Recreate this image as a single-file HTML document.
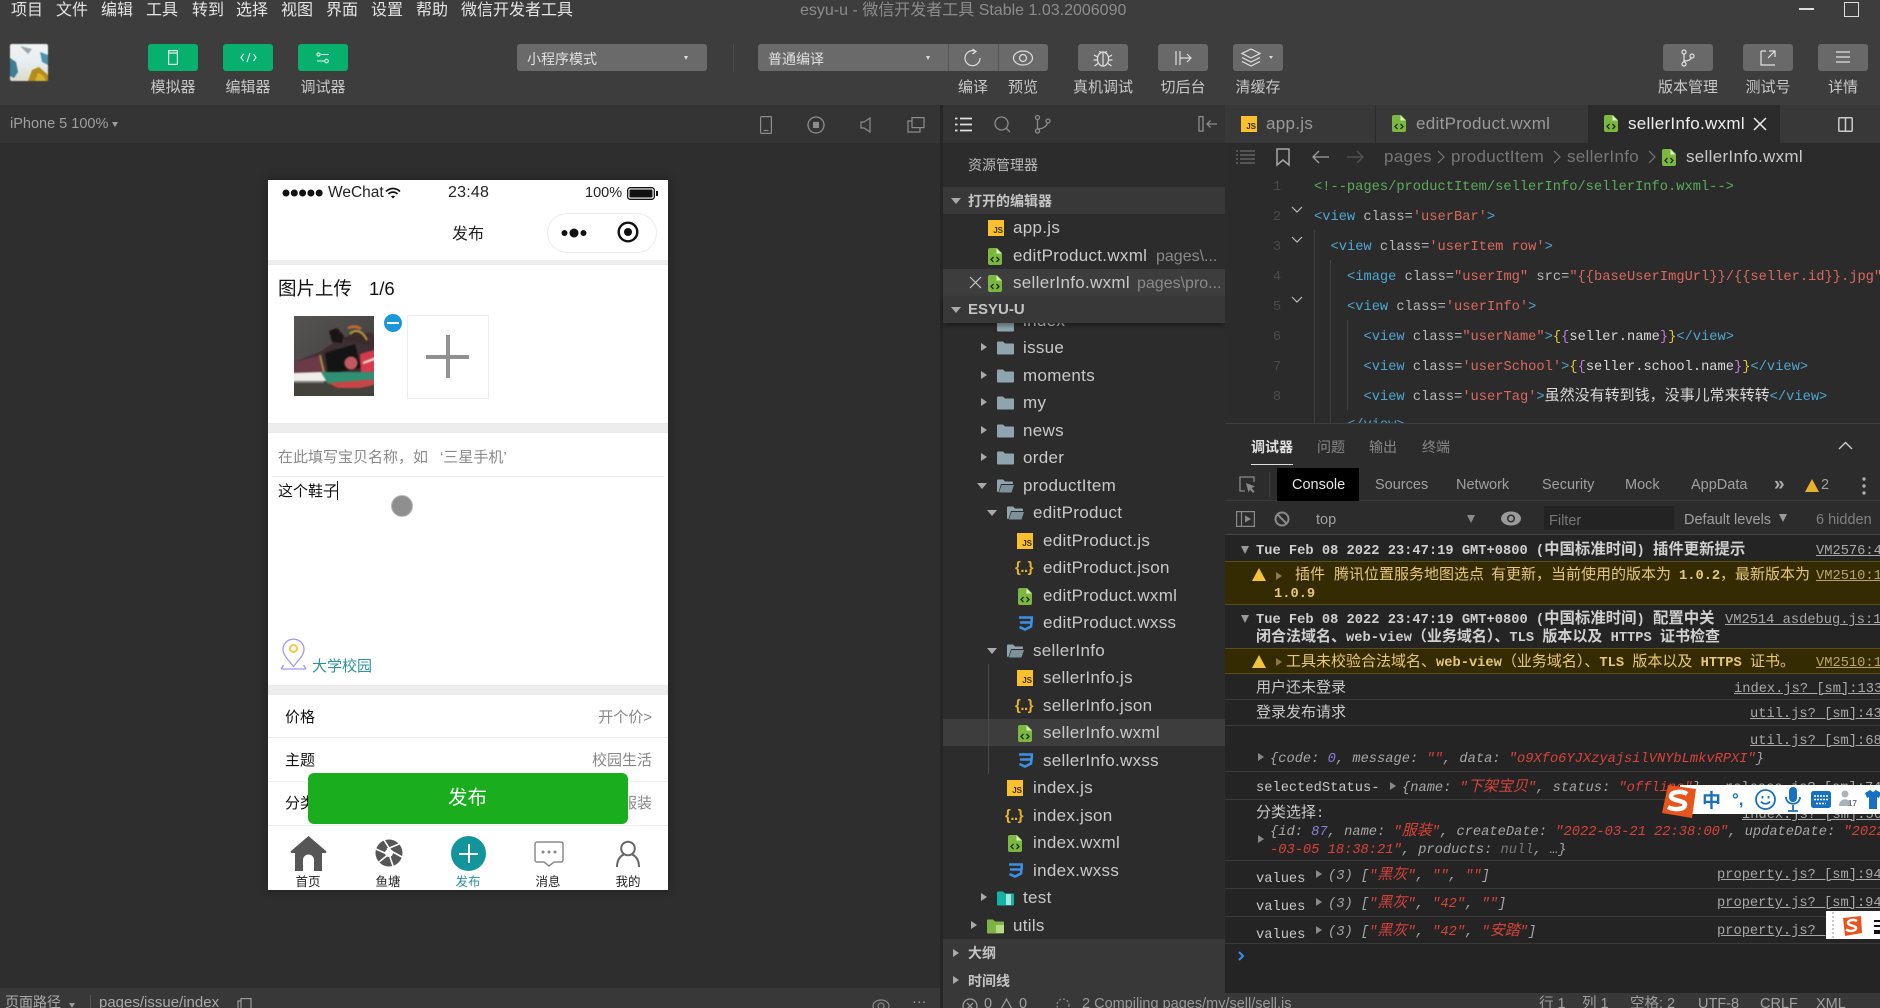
<!DOCTYPE html>
<html lang="zh"><head><meta charset="utf-8"><title>esyu-u</title>
<style>
html,body{margin:0;padding:0;background:#2e2e2e}
#r{position:relative;width:1880px;height:1008px;overflow:hidden;background:#2e2e2e;font-family:"Liberation Sans","Noto Sans CJK SC",sans-serif;color:#ccc}
.a{position:absolute;white-space:nowrap;line-height:20px}
.b{position:absolute}
.menu{font-size:16px;color:#e4e4e4;top:1px}
.lab{font-size:15px;color:#c8c8c8;top:78px;width:80px;text-align:center}
.gb{position:absolute;top:44px;width:50px;height:27px;background:#07b06c;border-radius:3px}
.db{position:absolute;top:44px;width:50px;height:27px;background:#696969;border-radius:3px}
.s{font-size:17px;letter-spacing:.3px;color:#c9c9c9}
.h{font-size:14px;font-weight:bold;color:#c4c4c4}
.hint{font-size:16px;color:#8a8a8a}
.sec{position:absolute;left:943px;width:282px;background:#383838}
.m{font-family:"Liberation Mono","Noto Sans CJK SC",monospace;font-size:13.72px;color:#c8c8c8;margin-top:2px}
.c{font-family:"Noto Sans CJK SC","Liberation Sans",sans-serif;font-size:15px;line-height:0}
.ln{color:#4a4a4a;width:14px;text-align:center;left:1270px}
.cg{color:#5cab5c}.tg{color:#4ea6cf}.at{color:#b8b8b8}.st{color:#d9695f}.yl{color:#e8c62c}.mg{color:#c678dd}.wh{color:#d8d8d8}
.u{text-decoration:underline;color:#a8a8a8}
.rl{position:absolute;left:1225px;width:655px;height:1px;background:#3a3a3a}
.warn{position:absolute;left:1225px;width:655px;background:#352b02;border-top:1px solid #5c4d10;border-bottom:1px solid #5c4d10;box-sizing:border-box}
.w{color:#e6c878}
.wb{color:#e6c878;font-weight:bold}
.bd{font-weight:bold;color:#d0d0d0}
.bd .c{font-weight:bold}
.bd .k{font-size:15.4px}
.t{font-size:14.5px;color:#a0a0a0}
.red{color:#d9423a;font-style:italic}
.gi{color:#a6a6a6;font-style:italic}
.p{font-size:15px;color:#111}
.g{color:#888}
.tl{font-size:12.5px;color:#222;width:60px;text-align:center;top:872px}
.js{position:absolute;width:16px;height:16px;background:#fbc02d;color:#3a2c00;font:bold 8px/8px "Liberation Sans",sans-serif;text-align:right;padding:0;overflow:hidden}
.js span{position:absolute;right:1px;bottom:1px}
.jn{position:absolute;font:bold 15px/20px "Liberation Sans",sans-serif;color:#e8b52c;letter-spacing:-.5px}
.arr{position:absolute;width:0;height:0}
.ar{border-left:6px solid #aaa;border-top:4.5px solid transparent;border-bottom:4.5px solid transparent}
.ad{border-top:6px solid #aaa;border-left:5px solid transparent;border-right:5px solid transparent}
svg{position:absolute;display:block;overflow:visible}
</style></head><body><div id="r">

<svg width="0" height="0" style="left:0;top:0"><defs>
<symbol id="x" viewBox="0 0 14 17"><path d="M2 0h7l5 5v10a2 2 0 0 1-2 2H2a2 2 0 0 1-2-2V2a2 2 0 0 1 2-2z" fill="#7cb83f"/><path d="M8.5 0.5l5 5h-5z" fill="#dff0c8"/><path d="M5.5 9l-2.5 2.5 2.500 2.500M8.500 9l2.500 2.500-2.500 2.500" fill="none" stroke="#1d2a10" stroke-width="1.3"/></symbol>
<symbol id="w" viewBox="0 0 16 15"><path d="M2 1.500h13l-1 9-6 3-5.500-2.500M3 6.500h10.500" fill="none" stroke="#3c8fe3" stroke-width="2.600"/></symbol>
<symbol id="f" viewBox="0 0 17 14"><path d="M0 1.500a1 1 0 0 1 1-1h5l2 2h8a1 1 0 0 1 1 1v9a1 1 0 0 1-1 1H1a1 1 0 0 1-1-1z" fill="#90a4ae"/></symbol>
<symbol id="o" viewBox="0 0 17 14"><path d="M0 1.500a1 1 0 0 1 1-1h5l2 2h7a1 1 0 0 1 1 1v1.500H4l-2.500 8H1a1 1 0 0 1-1-1z" fill="#90a4ae"/><path d="M4.500 6H17l-2.500 7.500H2z" fill="#7e919b"/></symbol>
</defs></svg>

<!-- top bar -->
<div class="b" style="left:0;top:0;width:1880px;height:105px;background:#3d3d3d"></div>
<div class="a menu" style="left:11px">项目</div><div class="a menu" style="left:56px">文件</div><div class="a menu" style="left:101px">编辑</div><div class="a menu" style="left:146px">工具</div><div class="a menu" style="left:192px">转到</div><div class="a menu" style="left:236px">选择</div><div class="a menu" style="left:281px">视图</div><div class="a menu" style="left:326px">界面</div><div class="a menu" style="left:371px">设置</div><div class="a menu" style="left:416px">帮助</div><div class="a menu" style="left:461px">微信开发者工具</div>
<div class="a" style="left:800px;top:1px;font-size:16px;color:#8c8c8c">esyu-u - 微信开发者工具 Stable 1.03.2006090</div>
<div class="b" style="left:1799px;top:8px;width:15px;height:2px;background:#ddd"></div>
<div class="b" style="left:1844px;top:2px;width:13px;height:13px;border:1.500px solid #ddd"></div>

<!-- avatar -->
<svg style="left:10px;top:44px;filter:blur(.6px)" width="38" height="37"><defs><linearGradient id="ag" x1="0" y1="0" x2="0" y2="1"><stop offset="0" stop-color="#f2f4f5"/><stop offset=".5" stop-color="#e8eef1"/><stop offset="1" stop-color="#dcdcc8"/></linearGradient></defs><rect width="38" height="37" rx="2" fill="url(#ag)"/><path d="M0 14l6 4 2 10-4 6-4-2z" fill="#3f7d95"/><path d="M30 8l8 3v10l-6-3z" fill="#4d93ad"/><path d="M10 2l8 8 4-5z" fill="#9aa5aa"/><path d="M18 37l4-11 7-3 9 8v6z" fill="#b48c1c"/><path d="M25 37l3-8 5 2 3 6z" fill="#d8b333"/></svg>

<!-- green buttons -->
<div class="gb" style="left:148px"></div><div class="gb" style="left:223px"></div><div class="gb" style="left:298px"></div>
<svg style="left:168px;top:50px" width="10" height="15" fill="none" stroke="#e4f7ee" stroke-width="1.200"><rect x=".6" y=".6" width="8.800" height="13.800"/><path d="M.6 3h8.800"/></svg>
<svg style="left:240px;top:52px" width="17" height="11" fill="none" stroke="#e4f7ee" stroke-width="1.100"><path d="M3.500 2L1 5.500 3.500 9M13.500 2L16 5.500 13.500 9M10 1L7 10"/></svg>
<svg style="left:316px;top:52px" width="14" height="12" fill="none" stroke="#e4f7ee" stroke-width="1.100"><circle cx="2.500" cy="2.500" r="1.600"/><path d="M5 2.500h8M1 9h7"/><circle cx="10.500" cy="9" r="1.800"/></svg>
<div class="a lab" style="left:133px">模拟器</div><div class="a lab" style="left:208px">编辑器</div><div class="a lab" style="left:283px">调试器</div>

<!-- dropdowns -->
<div class="b" style="left:517px;top:44px;width:190px;height:27px;background:#6a6a6a;border-radius:3px"></div>
<div class="a" style="left:527px;top:49px;font-size:14px;color:#e0e0e0">小程序模式</div>
<div class="arr" style="left:684px;top:56px;border-top:4px solid #ddd;border-left:2.500px solid transparent;border-right:2.500px solid transparent"></div>
<div class="b" style="left:733px;top:44px;width:1px;height:28px;background:#4d4d4d"></div>
<div class="b" style="left:758px;top:44px;width:290px;height:27px;background:#6a6a6a;border-radius:3px"></div>
<div class="b" style="left:948px;top:44px;width:1px;height:27px;background:#555"></div>
<div class="b" style="left:998px;top:44px;width:1px;height:27px;background:#555"></div>
<div class="a" style="left:768px;top:49px;font-size:14px;color:#e0e0e0">普通编译</div>
<div class="arr" style="left:926px;top:56px;border-top:4px solid #ddd;border-left:2.500px solid transparent;border-right:2.500px solid transparent"></div>
<svg style="left:963px;top:48px" width="20" height="20" fill="none" stroke="#ddd" stroke-width="1.200"><path d="M13 3.500A7.500 7.500 0 1 0 17 10"/><path d="M9.500 1l3.500 2.500-3.500 2.500"/></svg>
<svg style="left:1011px;top:50px" width="24" height="16" fill="none" stroke="#ddd" stroke-width="1.200"><ellipse cx="12" cy="8" rx="9.500" ry="7"/><circle cx="12" cy="8" r="3.500"/></svg>
<div class="a lab" style="left:933px">编译</div><div class="a lab" style="left:983px">预览</div>

<div class="db" style="left:1078px"></div><div class="db" style="left:1158px"></div><div class="db" style="left:1233px"></div>
<svg style="left:1093px;top:48px" width="20" height="20" fill="none" stroke="#e2e2e2" stroke-width="1.200"><ellipse cx="10" cy="11" rx="5.500" ry="7"/><path d="M10 4v14M6.500 3l1.500 2.500M13.500 3L12 5.500M1 7l3.500 2M19 7l-3.500 2M.5 12h4M19.500 12h-4M1.500 18l3.500-2.500M18.500 18L15 15.500"/></svg>
<svg style="left:1174px;top:50px" width="18" height="16" fill="none" stroke="#ddd" stroke-width="1.200"><path d="M2 1v14M6 1v14M6 8h11M13 4l4 4-4 4"/></svg>
<svg style="left:1241px;top:48px" width="22" height="20" fill="none" stroke="#e2e2e2" stroke-width="1.200"><path d="M10 1l9 4.500-9 4.500-9-4.500zM1 9.500l9 4.500 9-4.500M1 13.500l9 4.500 9-4.500"/></svg>
<div class="arr" style="left:1269px;top:56px;border-top:3.500px solid #ddd;border-left:2.500px solid transparent;border-right:2.500px solid transparent"></div>
<div class="a lab" style="left:1063px">真机调试</div><div class="a lab" style="left:1143px">切后台</div><div class="a lab" style="left:1218px">清缓存</div>

<div class="db" style="left:1663px"></div><div class="db" style="left:1743px"></div><div class="db" style="left:1818px"></div>
<svg style="left:1680px;top:49px" width="16" height="18" fill="none" stroke="#e2e2e2" stroke-width="1.200"><circle cx="4" cy="3" r="2"/><circle cx="4" cy="15" r="2"/><circle cx="12" cy="7" r="2"/><path d="M4 5v8M4 12c5 0 7-2 7.500-3.500"/></svg>
<svg style="left:1760px;top:49px" width="17" height="17" fill="none" stroke="#e2e2e2" stroke-width="1.200"><path d="M1 2v14h14M1 2h5M9 2h6v6M15 2L8 9"/></svg>
<svg style="left:1836px;top:50px" width="14" height="14" fill="none" stroke="#e2e2e2" stroke-width="1.300"><path d="M0 2h14M0 7h14M0 12h14"/></svg>
<div class="a lab" style="left:1648px">版本管理</div><div class="a lab" style="left:1728px">测试号</div><div class="a lab" style="left:1803px">详情</div>

<!-- subbar -->
<div class="b" style="left:0;top:105px;width:1880px;height:38px;background:#343434"></div>
<div class="a t" style="left:10px;top:114px">iPhone 5 100%</div>
<div class="arr" style="left:112px;top:122px;border-top:5px solid #a0a0a0;border-left:3.500px solid transparent;border-right:3.500px solid transparent"></div>
<svg style="left:760px;top:116px" width="12" height="18" fill="none" stroke="#8c8c8c" stroke-width="1.200"><rect x=".6" y=".6" width="10.800" height="16.800" rx="1"/><path d="M3.500 14.500h5"/></svg>
<svg style="left:807px;top:116px" width="18" height="18" fill="none" stroke="#8c8c8c" stroke-width="1.300"><circle cx="9" cy="9" r="8"/><rect x="6" y="6" width="6" height="6" fill="#8c8c8c" stroke="none"/></svg>
<svg style="left:860px;top:117px" width="12" height="16" fill="none" stroke="#8c8c8c" stroke-width="1.200"><path d="M10 1v14L4 11H1V5h3z"/></svg>
<svg style="left:907px;top:117px" width="18" height="16" fill="none" stroke="#8c8c8c" stroke-width="1.200"><rect x="5" y=".6" width="12" height="10"/><path d="M5 4H1v11h12v-4"/></svg>

<!-- simulator bg -->
<div class="b" style="left:0;top:143px;width:940px;height:845px;background:#2e2e2e"></div>

<!-- phone -->
<div class="b" style="left:268px;top:180px;width:400px;height:710px;background:#fff;box-shadow:0 0 10px rgba(0,0,0,.35)"></div>
<svg style="left:282px;top:189px" width="42" height="8" fill="#111"><circle cx="4" cy="4" r="3.500"/><circle cx="12.300" cy="4" r="3.500"/><circle cx="20.600" cy="4" r="3.500"/><circle cx="28.900" cy="4" r="3.500"/><circle cx="37.200" cy="4" r="3.500"/></svg>
<div class="a" style="left:328px;top:183px;font-size:15.500px;color:#222">WeChat</div>
<svg style="left:385px;top:187px" width="16" height="12" fill="none" stroke="#111" stroke-width="1.700"><path d="M1 4.500c4-4 10-4 14 0M3.500 7c2.500-2.500 6.500-2.500 9 0"/><path d="M6 9.500c1-1 3-1 4 0L8 11.500z" fill="#111" stroke="none"/></svg>
<div class="a" style="left:448px;top:183px;font-size:16px;color:#222;letter-spacing:.2px">23:48</div>
<div class="a" style="left:585px;top:183px;font-size:14.500px;color:#222">100%</div>
<svg style="left:627px;top:187px" width="32" height="13"><rect x=".7" y=".7" width="26.600" height="11.600" rx="2.500" fill="none" stroke="#111" stroke-width="1.300"/><rect x="2.500" y="2.500" width="23" height="8" rx="1" fill="#111"/><rect x="29" y="4" width="2" height="5" fill="#111"/></svg>
<div class="a" style="left:452px;top:225px;font-size:16px;color:#222">发布</div>
<div class="b" style="left:547px;top:213px;width:108px;height:38px;border:1px solid #ececec;border-radius:20px;box-sizing:content-box"></div>
<svg style="left:560px;top:225px" width="30" height="16" fill="#111"><circle cx="4.500" cy="8" r="3"/><circle cx="14" cy="8" r="4.500"/><circle cx="23.500" cy="8" r="3"/></svg>
<svg style="left:616px;top:220px" width="24" height="24"><circle cx="12" cy="12" r="9.300" fill="none" stroke="#111" stroke-width="2.400"/><circle cx="12" cy="12" r="4" fill="#111"/></svg>
<div class="b" style="left:268px;top:260px;width:400px;height:5px;background:#ededed"></div>
<div class="a" style="left:278px;top:279px;font-size:18.500px;color:#111">图片上传</div>
<div class="a" style="left:369px;top:279px;font-size:18.500px;color:#111">1/6</div>

<!-- shoe -->
<div class="b" style="left:294px;top:316px;width:80px;height:80px;overflow:hidden">
<svg style="left:0;top:0;filter:blur(.8px)" width="80" height="80" viewBox="0 0 80 80"><defs><linearGradient id="sg" x1="0" y1="0" x2="1" y2="1"><stop offset="0" stop-color="#565453"/><stop offset=".6" stop-color="#474544"/><stop offset="1" stop-color="#44423f"/></linearGradient></defs><rect x="-3" y="-3" width="86" height="86" fill="url(#sg)"/><rect x="-3" y="62" width="86" height="21" fill="#42413c"/>
<path d="M0 46l26-10 20-14 30-6 8 6v40H0z" fill="#3f2e33"/><path d="M0 46l27-7 5 18L0 58z" fill="#6b3a47"/><path d="M26 39l4 18" stroke="#b9a03a" stroke-width="1.600"/>
<path d="M31 37l30-9 6 24-33 6z" fill="#141414"/><path d="M35 15l8-3 7 8-2 7-10-1z" fill="#1b1414"/><path d="M50 24l10-9 12 4 5 13-9-5z" fill="#3a2a2a"/><path d="M56 18c5-5 12-4 17 6" stroke="#b9a03a" stroke-width="2" fill="none"/><path d="M54 12c5-2 9-2 13 1" stroke="#cf6a2a" stroke-width="2.500" fill="none"/>
<circle cx="57" cy="47" r="6.500" fill="#c05a60"/><path d="M66 38l18-5v26l-17 0z" fill="#d63a4c"/><path d="M69 46l15-6v3l-15 5z" fill="#e9e3da"/>
<path d="M-3 57l31-1 7 9-38 0z" fill="#efedea"/><path d="M27 56l57 0v8l-50 4z" fill="#2f8f72"/><path d="M34 67l50-4v5l-18 4H44z" fill="#c94545"/><rect x="-3" y="65" width="33" height="2" fill="#7f7d7b"/></svg></div>
<div class="b" style="left:384px;top:314px;width:18px;height:18px;border-radius:50%;background:#1b97da"></div>
<div class="b" style="left:387px;top:322px;width:12px;height:2px;background:#fff"></div>
<div class="b" style="left:407px;top:315px;width:80px;height:82px;border:1px solid #eee"></div>
<div class="b" style="left:426px;top:355px;width:43px;height:4px;background:#919191"></div>
<div class="b" style="left:446px;top:335px;width:4px;height:43px;background:#919191"></div>
<div class="b" style="left:268px;top:423px;width:400px;height:10px;background:#ededed"></div>
<div class="a p" style="left:278px;top:448px;color:#8a8a8a">在此填写宝贝名称，如</div>
<div class="a p" style="left:440px;top:448px;color:#8a8a8a">‘三星手机’</div>
<div class="b" style="left:272px;top:476px;width:392px;height:1px;background:#eee"></div>
<div class="a p" style="left:278px;top:482px">这个鞋子</div>
<div class="b" style="left:337px;top:481px;width:1px;height:19px;background:#111"></div>
<div class="b" style="left:391px;top:495px;width:20px;height:20px;border-radius:50%;background:#8f8f8f;border:1.500px solid #bbb"></div>
<svg style="left:280px;top:638px" width="27" height="33" fill="none"><path d="M13.500 1.200C7.500 1.200 3 5.800 3 11.500c0 6 6.500 11.500 10.500 17C17.500 23 24 17.500 24 11.500 24 5.800 19.500 1.200 13.500 1.200z" stroke="#a998ee" stroke-width="1.300"/><circle cx="13.500" cy="10.500" r="3.500" stroke="#f4c93a" stroke-width="2"/><path d="M1 31h25M1 31l2.500-4M26 31l-2.500-4" stroke="#a998ee" stroke-width="1.300"/></svg>
<div class="a p" style="left:312px;top:657px;color:#2a939c">大学校园</div>
<div class="b" style="left:268px;top:685px;width:400px;height:10px;background:#ededed"></div>
<div class="a p" style="left:285px;top:708px">价格</div><div class="a p g" style="right:1228px;top:708px">开个价&gt;</div>
<div class="b" style="left:268px;top:737px;width:400px;height:1px;background:#eee"></div>
<div class="a p" style="left:285px;top:751px">主题</div><div class="a p g" style="right:1228px;top:751px">校园生活</div>
<div class="b" style="left:268px;top:781px;width:400px;height:1px;background:#eee"></div>
<div class="a p" style="left:285px;top:794px">分类</div><div class="a p g" style="right:1228px;top:794px">服装</div>
<div class="b" style="left:268px;top:825px;width:400px;height:1px;background:#eee"></div>
<div class="b" style="left:308px;top:773px;width:320px;height:51px;background:#1aad1d;border-radius:6px"></div>
<div class="a" style="left:448px;top:788px;font-size:19.500px;color:#fff">发布</div>

<!-- tabbar -->
<svg style="left:290px;top:836px" width="37" height="35"><path d="M18.500 0L36 15c.8 1 .2 2-1 2h-3v18h-8V24a5.500 5.500 0 0 0-11 0v11H5V17H2c-1.200 0-1.800-1-1-2z" fill="#565656"/></svg>
<svg style="left:375px;top:839px" width="28" height="28" viewBox="0 0 28 28"><circle cx="14" cy="14" r="13.500" fill="#565656"/><g stroke="#fff" stroke-width="1.600"><path d="M9 1l7 11M24 5l-12 5M27 18l-11-6M18 27l-4-12M4 23l10-8M1 10l11 5"/></g><circle cx="14" cy="14" r="4" fill="#fff"/></svg>
<div class="b" style="left:451px;top:836px;width:35px;height:35px;border-radius:50%;background:#14959c"></div>
<div class="b" style="left:459px;top:852.500px;width:19px;height:2px;background:#fff"></div>
<div class="b" style="left:467.500px;top:844px;width:2px;height:19px;background:#fff"></div>
<svg style="left:534px;top:841px" width="30" height="26" fill="none" stroke="#8b8b8b" stroke-width="1.500"><path d="M3 1h24a2 2 0 0 1 2 2v16a2 2 0 0 1-2 2h-7l-5 4-5-4H3a2 2 0 0 1-2-2V3a2 2 0 0 1 2-2z"/><circle cx="9" cy="11" r=".8"/><circle cx="15" cy="11" r=".8"/><circle cx="21" cy="11" r=".8"/></svg>
<svg style="left:615px;top:840px" width="26" height="28" fill="none" stroke="#666" stroke-width="2"><circle cx="13" cy="8.500" r="6.800"/><path d="M2 27c0-8 4-11.500 7-12.500M24 27c0-8-4-11.500-7-12.500"/></svg>
<div class="a tl" style="left:278px">首页</div><div class="a tl" style="left:358px">鱼塘</div><div class="a tl" style="left:438px;color:#2a939c">发布</div><div class="a tl" style="left:518px">消息</div><div class="a tl" style="left:598px">我的</div>

<!-- bottom-left status -->
<div class="b" style="left:0;top:988px;width:940px;height:20px;background:#383838"></div>
<div class="a t" style="left:5px;top:992px;color:#aaa;font-size:14px">页面路径</div>
<div class="arr" style="left:69px;top:1003px;border-top:5px solid #999;border-left:3.500px solid transparent;border-right:3.500px solid transparent"></div>
<div class="b" style="left:90px;top:995px;width:1px;height:13px;background:#555"></div>
<div class="a t" style="left:99px;top:993px;color:#aaa;font-size:15px">pages/issue/index</div>
<svg style="left:237px;top:998px" width="15" height="12" fill="none" stroke="#999" stroke-width="1.200"><rect x="4" y=".6" width="10" height="12"/><path d="M4 3H1v10"/></svg>
<svg style="left:872px;top:998px" width="18" height="12" fill="none" stroke="#888" stroke-width="1.200"><ellipse cx="9" cy="8" rx="8" ry="6"/><circle cx="9" cy="8" r="3"/></svg>
<div class="a t" style="left:912px;top:992px;color:#999">···</div>

<!-- sidebar -->
<div class="b" style="left:940px;top:105px;width:3px;height:903px;background:#262626"></div>
<div class="b" style="left:943px;top:143px;width:282px;height:850px;background:#2c2c2c"></div>
<svg style="left:955px;top:117px" width="17" height="15" stroke="#e0e0e0" stroke-width="1.700"><path d="M5 1.500h12M5 7.500h12M5 13.500h12M0 1.500h2.500M0 7.500h2.500M0 13.500h2.500"/></svg>
<svg style="left:994px;top:116px" width="17" height="17" fill="none" stroke="#8c8c8c" stroke-width="1.300"><circle cx="7.500" cy="7.500" r="6.500"/><path d="M12 12l4 4"/></svg>
<svg style="left:1034px;top:115px" width="17" height="19" fill="none" stroke="#8c8c8c" stroke-width="1.300"><circle cx="3.500" cy="2.500" r="2"/><circle cx="3.500" cy="16" r="2"/><circle cx="14" cy="6" r="2"/><path d="M3.500 4.500v9.500M3.500 14c6 0 9-3 10-6"/></svg>
<svg style="left:1198px;top:116px" width="19" height="16" fill="none" stroke="#8c8c8c" stroke-width="1.300"><rect x="1" y=".6" width="4" height="14.500"/><path d="M19 8H9M12.500 4.500L9 8l3.500 3.500"/></svg>

<div class="a" style="left:968px;top:155px;font-size:14px;color:#bcbcbc">资源管理器</div>
<div class="sec" style="top:187px;height:27px"></div>
<div class="arr ad" style="left:951px;top:198px"></div>
<div class="a h" style="left:968px;top:191px">打开的编辑器</div>
<div class="js" style="left:988px;top:220px"><span>JS</span></div><div class="a s" style="left:1013px;top:218px">app.js</div>
<svg style="left:988px;top:248px" width="14" height="17"><use href="#x"/></svg><div class="a s" style="left:1013px;top:246px">editProduct.wxml</div><div class="a hint" style="left:1156px;top:247px">pages\...</div>
<div class="sec" style="top:269px;height:27px;background:#3d3d3d"></div>
<svg style="left:970px;top:277px" width="11" height="11" stroke="#c8c8c8" stroke-width="1.200"><path d="M0 0l11 11M11 0L0 11"/></svg>
<svg style="left:988px;top:275px" width="14" height="17"><use href="#x"/></svg><div class="a s" style="left:1013px;top:273px">sellerInfo.wxml</div><div class="a hint" style="left:1137px;top:274px">pages\pro...</div>

<!-- tree -->
<svg style="left:997px;top:318px" width="17" height="14"><use href="#f"/></svg><div class="a s" style="left:1023px;top:311px">index</div>
<div class="sec" style="top:296px;height:27px;box-shadow:0 3px 4px rgba(0,0,0,.35)"></div>
<div class="arr ad" style="left:951px;top:307px"></div>
<div class="a h" style="left:968px;top:300px;font-size:15px">ESYU-U</div>

<div class="arr ar" style="left:981px;top:343px"></div><svg style="left:997px;top:341px" width="17" height="14"><use href="#f"/></svg><div class="a s" style="left:1023px;top:338px">issue</div>
<div class="arr ar" style="left:981px;top:371px"></div><svg style="left:997px;top:369px" width="17" height="14"><use href="#f"/></svg><div class="a s" style="left:1023px;top:366px">moments</div>
<div class="arr ar" style="left:981px;top:398px"></div><svg style="left:997px;top:396px" width="17" height="14"><use href="#f"/></svg><div class="a s" style="left:1023px;top:393px">my</div>
<div class="arr ar" style="left:981px;top:426px"></div><svg style="left:997px;top:424px" width="17" height="14"><use href="#f"/></svg><div class="a s" style="left:1023px;top:421px">news</div>
<div class="arr ar" style="left:981px;top:453px"></div><svg style="left:997px;top:451px" width="17" height="14"><use href="#f"/></svg><div class="a s" style="left:1023px;top:448px">order</div>
<div class="arr ad" style="left:977px;top:483px"></div><svg style="left:997px;top:479px" width="17" height="14"><use href="#o"/></svg><div class="a s" style="left:1023px;top:476px">productItem</div>
<div class="arr ad" style="left:987px;top:510px"></div><svg style="left:1007px;top:506px" width="17" height="14"><use href="#o"/></svg><div class="a s" style="left:1033px;top:503px">editProduct</div>
<div class="js" style="left:1017px;top:533px"><span>JS</span></div><div class="a s" style="left:1043px;top:531px">editProduct.js</div>
<div class="a jn" style="left:1015px;top:558px">{..}</div><div class="a s" style="left:1043px;top:558px">editProduct.json</div>
<svg style="left:1018px;top:588px" width="14" height="17"><use href="#x"/></svg><div class="a s" style="left:1043px;top:586px">editProduct.wxml</div>
<svg style="left:1017px;top:616px" width="16" height="15"><use href="#w"/></svg><div class="a s" style="left:1043px;top:613px">editProduct.wxss</div>
<div class="arr ad" style="left:987px;top:648px"></div><svg style="left:1007px;top:644px" width="17" height="14"><use href="#o"/></svg><div class="a s" style="left:1033px;top:641px">sellerInfo</div>
<div class="b" style="left:943px;top:719px;width:282px;height:27px;background:#3d3d3d"></div>
<div class="b" style="left:988px;top:664px;width:1px;height:110px;background:#4a4a4a"></div>
<div class="js" style="left:1017px;top:670px"><span>JS</span></div><div class="a s" style="left:1043px;top:668px">sellerInfo.js</div>
<div class="a jn" style="left:1015px;top:696px">{..}</div><div class="a s" style="left:1043px;top:696px">sellerInfo.json</div>
<svg style="left:1018px;top:725px" width="14" height="17"><use href="#x"/></svg><div class="a s" style="left:1043px;top:723px">sellerInfo.wxml</div>
<svg style="left:1017px;top:753px" width="16" height="15"><use href="#w"/></svg><div class="a s" style="left:1043px;top:751px">sellerInfo.wxss</div>
<div class="js" style="left:1007px;top:780px"><span>JS</span></div><div class="a s" style="left:1033px;top:778px">index.js</div>
<div class="a jn" style="left:1005px;top:806px">{..}</div><div class="a s" style="left:1033px;top:806px">index.json</div>
<svg style="left:1008px;top:835px" width="14" height="17"><use href="#x"/></svg><div class="a s" style="left:1033px;top:833px">index.wxml</div>
<svg style="left:1007px;top:863px" width="16" height="15"><use href="#w"/></svg><div class="a s" style="left:1033px;top:861px">index.wxss</div>
<div class="arr ar" style="left:981px;top:893px"></div>
<svg style="left:997px;top:891px" width="17" height="15"><path d="M0 1.500a1 1 0 0 1 1-1h5l2 2h8a1 1 0 0 1 1 1v10a1 1 0 0 1-1 1H1a1 1 0 0 1-1-1z" fill="#12b5a5"/><rect x="9" y="3" width="5" height="11" fill="#a7e6df"/></svg>
<div class="a s" style="left:1023px;top:888px">test</div>
<div class="arr ar" style="left:971px;top:921px"></div>
<svg style="left:987px;top:919px" width="18" height="15"><path d="M0 1.500a1 1 0 0 1 1-1h5l2 2h8a1 1 0 0 1 1 1v10a1 1 0 0 1-1 1H1a1 1 0 0 1-1-1z" fill="#7cb342"/><rect x="9" y="6" width="8" height="8" fill="#b5d98a"/></svg>
<div class="a s" style="left:1013px;top:916px">utils</div>
<div class="sec" style="top:939px;height:54px"></div>
<div class="arr ar" style="left:953px;top:949px"></div><div class="a h" style="left:968px;top:943px">大纲</div>
<div class="arr ar" style="left:953px;top:976px"></div><div class="a h" style="left:968px;top:971px">时间线</div>

<!-- editor tabs -->
<div class="b" style="left:1225px;top:105px;width:655px;height:38px;background:#383838"></div>
<div class="b" style="left:1375px;top:105px;width:1px;height:38px;background:#2c2c2c"></div>
<div class="b" style="left:1588px;top:105px;width:192px;height:38px;background:#2b2b2b"></div>
<div class="js" style="left:1241px;top:116px"><span>JS</span></div><div class="a s" style="left:1266px;top:114px;color:#9a9a9a">app.js</div>
<svg style="left:1392px;top:115px" width="14" height="17"><use href="#x"/></svg><div class="a s" style="left:1416px;top:114px;color:#9a9a9a">editProduct.wxml</div>
<svg style="left:1604px;top:115px" width="14" height="17"><use href="#x"/></svg><div class="a s" style="left:1628px;top:114px;color:#eee">sellerInfo.wxml</div>
<svg style="left:1754px;top:118px" width="12" height="12" stroke="#eee" stroke-width="1.500"><path d="M0 0l12 12M12 0L0 12"/></svg>
<svg style="left:1838px;top:117px" width="15" height="15" fill="none" stroke="#ccc" stroke-width="1.500"><rect x=".8" y=".8" width="13.400" height="13.400" rx="1"/><path d="M7.500 1v13"/></svg>

<!-- editor -->
<div class="b" style="left:1225px;top:143px;width:655px;height:280px;background:#2b2b2b;overflow:hidden"></div>
<svg style="left:1236px;top:150px" width="19" height="14" stroke="#7c7c7c" stroke-width="1.100"><path d="M4 1h15M4 5h15M4 9h15M4 13h15M0 1h2M0 5h2M0 9h2M0 13h2"/></svg>
<svg style="left:1276px;top:148px" width="14" height="18" fill="none" stroke="#a8a8a8" stroke-width="1.500"><path d="M1 1h12v16l-6-5-6 5z"/></svg>
<svg style="left:1312px;top:150px" width="17" height="14" fill="none" stroke="#a0a0a0" stroke-width="1.300"><path d="M17 7H1M7 1L1 7l6 6"/></svg>
<svg style="left:1347px;top:150px" width="17" height="14" fill="none" stroke="#555" stroke-width="1.300"><path d="M0 7h16M10 1l6 6-6 6"/></svg>
<div class="a s" style="left:1384px;top:147px;color:#777">pages</div>
<svg style="left:1437px;top:150px" width="8" height="14" fill="none" stroke="#777" stroke-width="1.200"><path d="M1 1l6 6-6 6"/></svg>
<div class="a s" style="left:1451px;top:147px;color:#777">productItem</div>
<svg style="left:1553px;top:150px" width="8" height="14" fill="none" stroke="#777" stroke-width="1.200"><path d="M1 1l6 6-6 6"/></svg>
<div class="a s" style="left:1567px;top:147px;color:#777">sellerInfo</div>
<svg style="left:1648px;top:150px" width="8" height="14" fill="none" stroke="#777" stroke-width="1.200"><path d="M1 1l6 6-6 6"/></svg>
<svg style="left:1662px;top:149px" width="14" height="17"><use href="#x"/></svg>
<div class="a s" style="left:1686px;top:147px">sellerInfo.wxml</div>

<div class="a m ln" style="top:176px">1</div><div class="a m ln" style="top:206px">2</div><div class="a m ln" style="top:236px">3</div><div class="a m ln" style="top:266px">4</div><div class="a m ln" style="top:296px">5</div><div class="a m ln" style="top:326px">6</div><div class="a m ln" style="top:356px">7</div><div class="a m ln" style="top:386px">8</div>
<svg style="left:1291px;top:206px" width="12" height="8" fill="none" stroke="#bbb" stroke-width="1.200"><path d="M1 1l5 5 5-5"/></svg>
<svg style="left:1291px;top:236px" width="12" height="8" fill="none" stroke="#bbb" stroke-width="1.200"><path d="M1 1l5 5 5-5"/></svg>
<svg style="left:1291px;top:296px" width="12" height="8" fill="none" stroke="#bbb" stroke-width="1.200"><path d="M1 1l5 5 5-5"/></svg>
<div class="b" style="left:1314px;top:230px;width:1px;height:193px;background:#404040"></div>
<div class="b" style="left:1330px;top:260px;width:1px;height:163px;background:#404040"></div>
<div class="b" style="left:1347px;top:320px;width:1px;height:90px;background:#404040"></div>

<div class="a m cg" style="left:1314px;top:176px">&lt;!--pages/productItem/sellerInfo/sellerInfo.wxml--&gt;</div>
<div class="a m" style="left:1314px;top:206px"><span class="tg">&lt;view</span> <span class="at">class=</span><span class="st">'userBar'</span><span class="tg">&gt;</span></div>
<div class="a m" style="left:1330.500px;top:236px"><span class="tg">&lt;view</span> <span class="at">class=</span><span class="st">'userItem row'</span><span class="tg">&gt;</span></div>
<div class="a m" style="left:1347px;top:266px"><span class="tg">&lt;image</span> <span class="at">class=</span><span class="st">"userImg"</span> <span class="at">src=</span><span class="st">"{{baseUserImgUrl}}/{{seller.id}}.jpg"</span></div>
<div class="a m" style="left:1347px;top:296px"><span class="tg">&lt;view</span> <span class="at">class=</span><span class="st">'userInfo'</span><span class="tg">&gt;</span></div>
<div class="a m" style="left:1363.500px;top:326px"><span class="tg">&lt;view</span> <span class="at">class=</span><span class="st">"userName"</span><span class="tg">&gt;</span><span class="yl">{</span><span class="mg">{</span><span class="wh">seller.name</span><span class="mg">}</span><span class="yl">}</span><span class="tg">&lt;/view&gt;</span></div>
<div class="a m" style="left:1363.500px;top:356px"><span class="tg">&lt;view</span> <span class="at">class=</span><span class="st">'userSchool'</span><span class="tg">&gt;</span><span class="yl">{</span><span class="mg">{</span><span class="wh">seller.school.name</span><span class="mg">}</span><span class="yl">}</span><span class="tg">&lt;/view&gt;</span></div>
<div class="a m" style="left:1363.500px;top:386px"><span class="tg">&lt;view</span> <span class="at">class=</span><span class="st">'userTag'</span><span class="tg">&gt;</span><span class="c wh">虽然没有转到钱，没事儿常来转转</span><span class="tg">&lt;/view&gt;</span></div>
<div class="b" style="left:1347px;top:418px;width:80px;height:5px;overflow:hidden"><div class="a m tg" style="left:0;top:-4px">&lt;/view&gt;</div></div>

<!-- debugger -->
<div class="b" style="left:1225px;top:423px;width:655px;height:585px;background:#242424"></div>
<div class="b" style="left:1225px;top:423px;width:655px;height:45px;background:#2c2c2c;border-top:1px solid #3e3e3e;box-sizing:border-box"></div>
<div class="a" style="left:1251px;top:437px;font-size:14px;font-weight:bold;color:#e0e0e0">调试器</div>
<div class="b" style="left:1251px;top:464px;width:42px;height:1px;background:#ddd"></div>
<div class="a" style="left:1317px;top:437px;font-size:14px;color:#888">问题</div><div class="a" style="left:1369px;top:437px;font-size:14px;color:#888">输出</div><div class="a" style="left:1422px;top:437px;font-size:14px;color:#888">终端</div>
<svg style="left:1838px;top:441px" width="15" height="9" fill="none" stroke="#ccc" stroke-width="1.400"><path d="M1 8l6.500-6.500L14 8"/></svg>

<div class="b" style="left:1225px;top:468px;width:655px;height:33px;background:#2c2c2c;border-bottom:1px solid #3a3a3a;box-sizing:border-box"></div>
<svg style="left:1239px;top:476px" width="18" height="18" fill="none" stroke="#8a8a8a" stroke-width="1.300"><path d="M6 15H1V1h14v5"/><path d="M7 7l9 3.500-3.500 1.500 3 3.500-1.500 1.500-3-3.500-1.500 3z" fill="#8a8a8a" stroke="none"/></svg>
<div class="b" style="left:1269px;top:472px;width:1px;height:25px;background:#3e3e3e"></div>
<div class="b" style="left:1277px;top:468px;width:82px;height:33px;background:#000"></div>
<div class="a" style="left:1292px;top:475px;font-size:14.500px;color:#e6e6e6">Console</div>
<div class="a t" style="left:1375px;top:475px">Sources</div><div class="a t" style="left:1456px;top:475px">Network</div><div class="a t" style="left:1542px;top:475px">Security</div><div class="a t" style="left:1625px;top:475px">Mock</div><div class="a t" style="left:1691px;top:475px">AppData</div>
<div class="a" style="left:1774px;top:475px;font-size:19px;font-weight:bold;color:#aaa">»</div>
<svg style="left:1805px;top:479px" width="14" height="13"><path d="M7 0l7 13H0z" fill="#e9b02b"/></svg>
<div class="a t" style="left:1821px;top:475px">2</div>
<svg style="left:1862px;top:477px" width="4" height="18" fill="#aaa"><circle cx="2" cy="2" r="1.700"/><circle cx="2" cy="9" r="1.700"/><circle cx="2" cy="16" r="1.700"/></svg>

<div class="b" style="left:1225px;top:501px;width:655px;height:34px;background:#2c2c2c;border-bottom:1px solid #444;box-sizing:border-box"></div>
<svg style="left:1236px;top:511px" width="19" height="16" fill="none" stroke="#8a8a8a" stroke-width="1.200"><rect x=".6" y=".6" width="17.800" height="14.800"/><path d="M5.500 1v14"/><path d="M9 4.500l6 3.500-6 3.500z" fill="#8a8a8a" stroke="none"/></svg>
<svg style="left:1274px;top:511px" width="16" height="16" fill="none" stroke="#8a8a8a" stroke-width="2"><circle cx="8" cy="8" r="6.500"/><path d="M3.500 3.500l9 9"/></svg>
<div class="a t" style="left:1316px;top:510px">top</div>
<div class="arr" style="left:1467px;top:515px;border-top:8px solid #8a8a8a;border-left:4.500px solid transparent;border-right:4.500px solid transparent"></div>
<svg style="left:1501px;top:511px" width="20" height="15"><ellipse cx="10" cy="7.500" rx="10" ry="7" fill="#9a9a9a"/><circle cx="10" cy="7.500" r="4" fill="#2c2c2c"/><circle cx="10" cy="7.500" r="2.500" fill="#9a9a9a"/></svg>
<div class="b" style="left:1544px;top:506px;width:130px;height:24px;background:#232323"></div>
<div class="a t" style="left:1549px;top:511px;color:#777">Filter</div>
<div class="a t" style="left:1684px;top:510px">Default levels</div>
<div class="arr" style="left:1779px;top:514px;border-top:8px solid #9a9a9a;border-left:4.500px solid transparent;border-right:4.500px solid transparent"></div>
<div class="a t" style="left:1816px;top:510px;color:#808080">6 hidden</div>

<!-- console -->
<div class="arr" style="left:1241px;top:546px;border-top:8px solid #999;border-left:4px solid transparent;border-right:4px solid transparent"></div>
<div class="a m bd" style="left:1256px;top:540px">Tue Feb 08 2022 23:47:19 GMT+0800 (<span class="c k">中国标准时间</span>) <span class="c k">插件更新提示</span></div>
<div class="a m u" style="left:1816px;top:540px">VM2576:4</div>
<div class="warn" style="top:561px;height:44px"></div>
<svg style="left:1252px;top:568px" width="14" height="13"><path d="M7 0l7 13H0z" fill="#f2c43a"/></svg>
<div class="arr" style="left:1276px;top:572px;border-left:6px solid #8a7a4a;border-top:4.500px solid transparent;border-bottom:4.500px solid transparent"></div>
<div class="a m w" style="left:1295px;top:565px"><span class="c">插件</span></div>
<div class="a m w" style="left:1334px;top:565px"><span class="c">腾讯位置服务地图选点</span></div>
<div class="a m w" style="left:1491px;top:565px"><span class="c">有更新，当前使用的版本为</span></div>
<div class="a m wb" style="left:1679px;top:565px">1.0.2</div>
<div class="a m w" style="left:1720px;top:565px"><span class="c">，最新版本为</span></div>
<div class="a m u" style="left:1816px;top:565px;color:#b8a565">VM2510:1</div>
<div class="a m wb" style="left:1274px;top:583px">1.0.9</div>

<div class="arr" style="left:1241px;top:615px;border-top:8px solid #999;border-left:4px solid transparent;border-right:4px solid transparent"></div>
<div class="a m bd" style="left:1256px;top:609px">Tue Feb 08 2022 23:47:19 GMT+0800 (<span class="c k">中国标准时间</span>) <span class="c k">配置中关</span></div>
<div class="a m u" style="left:1725px;top:609px">VM2514 asdebug.js:1</div>
<div class="a m bd" style="left:1256px;top:627px"><span class="c">闭合法域名、</span>web-view<span class="c">（业务域名）、</span>TLS <span class="c">版本以及</span> HTTPS <span class="c">证书检查</span></div>
<div class="warn" style="top:648px;height:26px"></div>
<svg style="left:1252px;top:655px" width="14" height="13"><path d="M7 0l7 13H0z" fill="#f2c43a"/></svg>
<div class="arr" style="left:1276px;top:658px;border-left:6px solid #8a7a4a;border-top:4.500px solid transparent;border-bottom:4.500px solid transparent"></div>
<div class="a m w" style="left:1286px;top:652px"><span class="c">工具未校验合法域名、</span><b>web-view</b><span class="c">（业务域名）、</span><b>TLS</b> <span class="c">版本以及</span> <b>HTTPS</b> <span class="c">证书。</span></div>
<div class="a m u" style="left:1816px;top:652px;color:#b8a565">VM2510:1</div>

<div class="a m" style="left:1256px;top:678px"><span class="c">用户还未登录</span></div>
<div class="a m u" style="left:1734px;top:678px">index.js? [sm]:133</div>
<div class="rl" style="top:699px"></div>
<div class="a m" style="left:1256px;top:703px"><span class="c">登录发布请求</span></div>
<div class="a m u" style="left:1750px;top:703px">util.js? [sm]:43</div>
<div class="rl" style="top:725px"></div>
<div class="a m u" style="left:1750px;top:730px">util.js? [sm]:68</div>
<div class="arr ar" style="left:1258px;top:753px;border-left-color:#888"></div>
<div class="a m gi" style="left:1270px;top:748px">{code: <span style="color:#8a7fe0">0</span>, message: <span class="red">""</span>, data: <span class="red">"o9Xfo6YJXzyajsilVNYbLmkvRPXI"</span>}</div>
<div class="rl" style="top:771px"></div>
<div class="a m" style="left:1256px;top:777px">selectedStatus-</div>
<div class="arr ar" style="left:1390px;top:782px;border-left-color:#888"></div>
<div class="a m gi" style="left:1402px;top:777px">{name: <span class="red">"<span class="c">下架宝贝</span>"</span>, status: <span class="red">"offline"</span>}</div>
<div class="a m u" style="left:1725px;top:777px">release.js? [sm]:74</div>
<div class="rl" style="top:799px"></div>
<div class="a m u" style="left:1742px;top:804px">index.js? [sm]:56</div>
<div class="a m" style="left:1256px;top:803px"><span class="c">分类选择</span>:</div>
<div class="arr ar" style="left:1258px;top:835px;border-left-color:#888"></div>
<div class="a m gi" style="left:1270px;top:821px">{id: <span style="color:#8a7fe0">87</span>, name: <span class="red">"<span class="c">服装</span>"</span>, createDate: <span class="red">"2022-03-21 22:38:00"</span>, updateDate: <span class="red">"2022</span></div>
<div class="a m gi" style="left:1270px;top:839px"><span class="red">-03-05 18:38:21"</span>, products: <span style="color:#777">null</span>, …}</div>
<div class="rl" style="top:860px"></div>
<div class="a m" style="left:1256px;top:868px">values</div><div class="arr ar" style="left:1316px;top:870px;border-left-color:#888"></div>
<div class="a m gi" style="left:1328px;top:865px">(3) [<span class="red">"<span class="c">黑灰</span>"</span>, <span class="red">""</span>, <span class="red">""</span>]</div>
<div class="a m u" style="left:1717px;top:864px">property.js? [sm]:94</div>
<div class="rl" style="top:888px"></div>
<div class="a m" style="left:1256px;top:896px">values</div><div class="arr ar" style="left:1316px;top:898px;border-left-color:#888"></div>
<div class="a m gi" style="left:1328px;top:893px">(3) [<span class="red">"<span class="c">黑灰</span>"</span>, <span class="red">"42"</span>, <span class="red">""</span>]</div>
<div class="a m u" style="left:1717px;top:892px">property.js? [sm]:94</div>
<div class="rl" style="top:916px"></div>
<div class="a m" style="left:1256px;top:924px">values</div><div class="arr ar" style="left:1316px;top:926px;border-left-color:#888"></div>
<div class="a m gi" style="left:1328px;top:921px">(3) [<span class="red">"<span class="c">黑灰</span>"</span>, <span class="red">"42"</span>, <span class="red">"<span class="c">安踏</span>"</span>]</div>
<div class="a m u" style="left:1717px;top:920px">property.js? [sm]:94</div>
<div class="rl" style="top:943px"></div>
<svg style="left:1238px;top:951px" width="7" height="10" fill="none" stroke="#3a8ee6" stroke-width="2"><path d="M1 1l4 4-4 4"/></svg>

<!-- IME -->
<div class="b" style="left:1680px;top:785px;width:200px;height:29px;background:#fff"></div>
<svg style="left:1660px;top:782px" width="38" height="38"><path d="M8 3l28 4-4 29-30-5z" fill="#e8551c"/><path d="M27 12c-4-3-15-3-16 2s15 4 14 9-12 5-17 2" fill="none" stroke="#fff" stroke-width="4.500"/></svg>
<div class="a" style="left:1702px;top:792px;font-size:19px;font-weight:bold;color:#1770c2">中</div>
<div class="a" style="left:1732px;top:790px;font-size:17px;font-weight:bold;color:#1770c2">°,</div>
<svg style="left:1755px;top:789px" width="21" height="21" fill="none" stroke="#1770c2" stroke-width="1.800"><circle cx="10.500" cy="10.500" r="9.500"/><path d="M6 12.500c2 3 7 3 9 0M7.500 7v2.500M13.500 7v2.500"/></svg>
<svg style="left:1785px;top:787px" width="16" height="25"><rect x="4" y="0" width="8" height="15" rx="4" fill="#1770c2"/><path d="M1 10c0 9 14 9 14 0M8 18v5M3 24h10" stroke="#1770c2" stroke-width="1.800" fill="none"/></svg>
<svg style="left:1811px;top:791px" width="20" height="17"><rect width="20" height="17" rx="2.500" fill="#1770c2"/><path d="M3 5h14M3 8.500h14M5 12.500h10" stroke="#fff" stroke-width="1.500" stroke-dasharray="2 1"/></svg>
<svg style="left:1838px;top:790px" width="20" height="20"><circle cx="7" cy="4" r="3.500" fill="#aab2bc"/><path d="M1 16c0-9 12-9 12 0z" fill="#aab2bc"/></svg>
<div class="a" style="left:1848px;top:798px;font:bold 8px/12px 'Liberation Sans',sans-serif;color:#6c7680">17</div>
<svg style="left:1865px;top:790px" width="16" height="20"><path d="M5 0l3 2 3-2 5 3-2 5-2-1v12H4V7L2 8 0 3z" fill="#1770c2"/></svg>
<div class="b" style="left:1826px;top:911px;width:54px;height:28px;background:#fff"></div>
<div class="b" style="left:1832px;top:912px;width:0;height:26px;border-left:2px dotted #ccc"></div>
<svg style="left:1841px;top:915px" width="22" height="22"><path d="M2 3l18-2 1 17-17 3z" fill="#e8551c"/><path d="M16 6c-3-2-9-1-9 2s9 2.500 8 5.500-7 3-10 1" fill="none" stroke="#fff" stroke-width="2.500"/></svg>
<div class="b" style="left:1874px;top:920px;width:6px;height:2px;background:#111"></div>
<div class="b" style="left:1874px;top:925px;width:6px;height:2px;background:#111"></div>
<div class="b" style="left:1874px;top:930px;width:6px;height:4px;background:#111"></div>

<!-- bottom status -->
<div class="b" style="left:943px;top:993px;width:937px;height:15px;background:#383838"></div>
<svg style="left:962px;top:998px" width="16" height="16" fill="none" stroke="#a0a0a0" stroke-width="1.200"><circle cx="8" cy="8" r="7"/><path d="M5 5l6 6M11 5l-6 6"/></svg>
<div class="a t" style="left:984px;top:994px">0</div>
<svg style="left:999px;top:998px" width="15" height="14" fill="none" stroke="#a0a0a0" stroke-width="1.200"><path d="M7.500 1L14 13H1z"/></svg>
<div class="a t" style="left:1019px;top:994px">0</div>
<svg style="left:1056px;top:998px" width="14" height="14" fill="none" stroke="#8a8a8a" stroke-width="1.300" stroke-dasharray="2 2"><circle cx="7" cy="7" r="6"/></svg>
<div class="a t" style="left:1082px;top:994px;color:#999">2 Compiling pages/my/sell/sell.js</div>
<div class="a t" style="left:1539px;top:994px">行 1</div><div class="a t" style="left:1582px;top:994px">列 1</div><div class="a t" style="left:1630px;top:994px">空格: 2</div><div class="a t" style="left:1698px;top:994px">UTF-8</div><div class="a t" style="left:1760px;top:994px">CRLF</div><div class="a t" style="left:1816px;top:994px">XML</div>
</div></body></html>
